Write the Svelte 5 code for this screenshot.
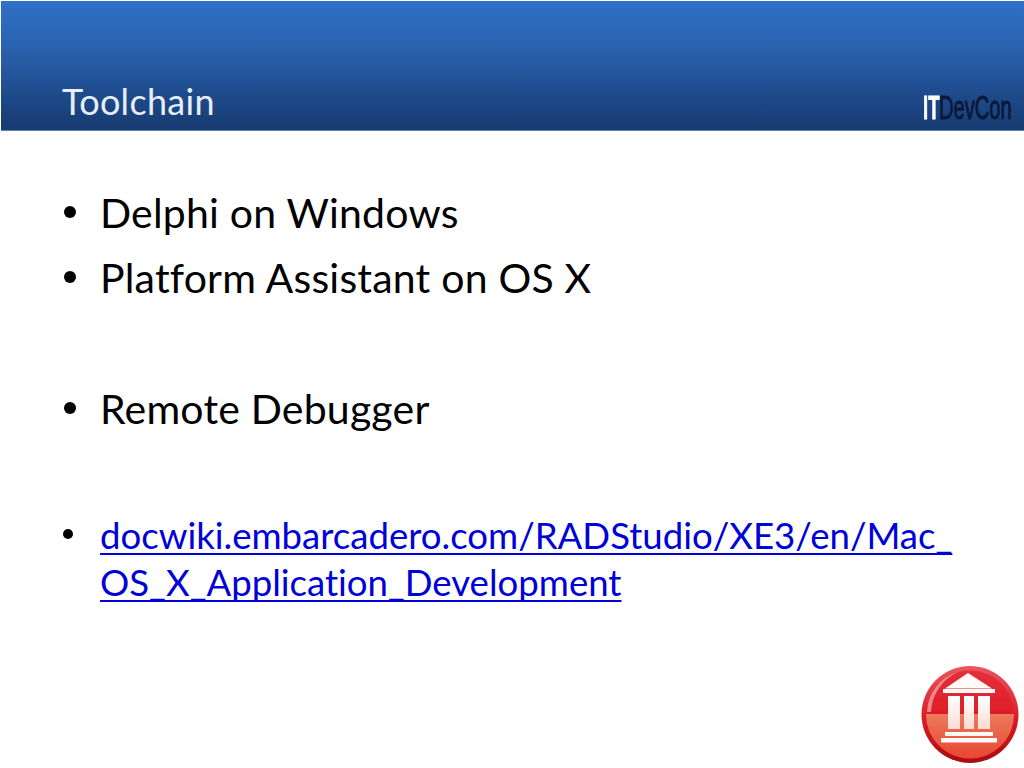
<script>
  const items = [
    { text: 'Delphi on Windows', gap: 0 },
    { text: 'Platform Assistant on OS X', gap: 0 },
    { text: 'Remote Debugger', gap: 1 },
  ];
</script>

<div class="slide">
  <header class="banner">
    <h1>Toolchain</h1>
    <div class="brand"><span class="it">IT</span><span class="dev">DevCon</span></div>
  </header>

  <ul class="points">
    {#each items as item}
      <li class:spaced={item.gap}>{item.text}</li>
    {/each}
    <li class="small">
      <a href="#top">docwiki.embarcadero.com/RADStudio/XE3/en/Mac_<br />OS_X_Application_Development</a>
    </li>
  </ul>

  <svg class="badge" width="104" height="106" viewBox="918 662 104 106">
    <defs>
      <linearGradient id="rim" x1="0" y1="0" x2="0" y2="1">
        <stop offset="0" stop-color="#ea5560" />
        <stop offset="0.6" stop-color="#d81822" />
        <stop offset="1" stop-color="#a80c12" />
      </linearGradient>
      <linearGradient id="upper" x1="0" y1="0" x2="0" y2="1">
        <stop offset="0" stop-color="#e2303a" />
        <stop offset="1" stop-color="#dc0a14" />
      </linearGradient>
      <linearGradient id="lower" x1="0" y1="0" x2="0" y2="1">
        <stop offset="0" stop-color="#ec7a5c" />
        <stop offset="1" stop-color="#e8402e" />
      </linearGradient>
      <linearGradient id="column" x1="0" y1="0" x2="0" y2="1">
        <stop offset="0" stop-color="#ffffff" />
        <stop offset="1" stop-color="#fbdcd2" />
      </linearGradient>
      <clipPath id="face"><circle cx="970" cy="714.5" r="44" /></clipPath>
      <filter id="soft"><feGaussianBlur stdDeviation="0.6" /></filter>
    </defs>
    <g filter="url(#soft)">
      <circle cx="970" cy="714.5" r="48.5" fill="url(#rim)" />
      <circle cx="970" cy="714.5" r="44" fill="url(#upper)" />
      <rect x="920" y="714" width="100" height="50" fill="url(#lower)" clip-path="url(#face)" />
      <path d="M927 712 A43 43 0 0 1 958 672 A46 46 0 0 0 931 712Z" fill="#f8b0b0" opacity="0.7" />
      <g fill="#fffaf7">
        <path d="M968 673 L945 688.5 H992 Z" />
        <rect x="943" y="689" width="52" height="4" />
        <rect x="945" y="732" width="48" height="4" />
        <rect x="941" y="738" width="56" height="4.5" />
      </g>
      <g fill="url(#column)">
        <rect x="948" y="696" width="12" height="33" />
        <rect x="964" y="696" width="10" height="33" />
        <rect x="978" y="696" width="12" height="33" />
      </g>
    </g>
  </svg>
</div>

<style>
  :global(body) {
    margin: 0;
    background: #fff;
  }

  .slide {
    position: relative;
    width: 1024px;
    height: 768px;
    overflow: hidden;
    background: #fff;
    font-family: Lato, "Open Sans", sans-serif;
    font-variant-ligatures: none;
  }

  .banner {
    height: 131px;
    box-sizing: border-box;
    margin-left: 1px;
    display: flex;
    align-items: flex-end;
    justify-content: space-between;
    padding: 0 12px 9px 61px;
    background: linear-gradient(#2f70c8, #2a63b0 35%, #1f4c8e 70%, #173a70);
    border-top: 1px solid #fff;
    border-bottom: 1px solid #5c82b0;
  }

  h1 {
    margin: 0 0 -1px;
    font-size: 36px;
    font-weight: 400;
    line-height: 42px;
    letter-spacing: 0.3px;
    color: #e6eef8;
  }

  .brand {
    display: flex;
    margin-bottom: -1px;
    font-family: "Liberation Sans", sans-serif;
    font-size: 33px;
    line-height: 28px;
  }

  .it {
    width: 16px;
    color: #fff;
    font-weight: 700;
    transform: scaleX(0.56);
    transform-origin: left;
    -webkit-text-stroke: 0.8px #fff;
  }

  .dev {
    width: 73px;
    color: #0b1a38;
    transform: scaleX(0.61);
    transform-origin: left;
    -webkit-text-stroke: 1px #0b1a38;
  }

  .points {
    margin: 0;
    padding: 49px 0 0 100px;
    list-style: none;
    color: #000;
  }

  li {
    position: relative;
    font-size: 41px;
    line-height: 65px;
    letter-spacing: 0.2px;
  }

  li::before {
    content: '';
    position: absolute;
    left: -36px;
    top: 26px;
    width: 12px;
    height: 12px;
    border-radius: 50%;
    background: #000;
  }

  li.spaced {
    margin-top: 66px;
  }

  li.small {
    margin-top: 71px;
    font-size: 36.6px;
    line-height: 47px;
    letter-spacing: 0;
  }

  li.small::before {
    left: -37px;
    top: 17px;
    width: 10px;
    height: 10px;
  }

  a {
    color: #0000d8;
    text-decoration: underline;
    text-decoration-thickness: 2px;
    text-underline-offset: 4px;
    text-decoration-skip-ink: none;
  }

  .badge {
    position: absolute;
    left: 918px;
    top: 662px;
  }
</style>
